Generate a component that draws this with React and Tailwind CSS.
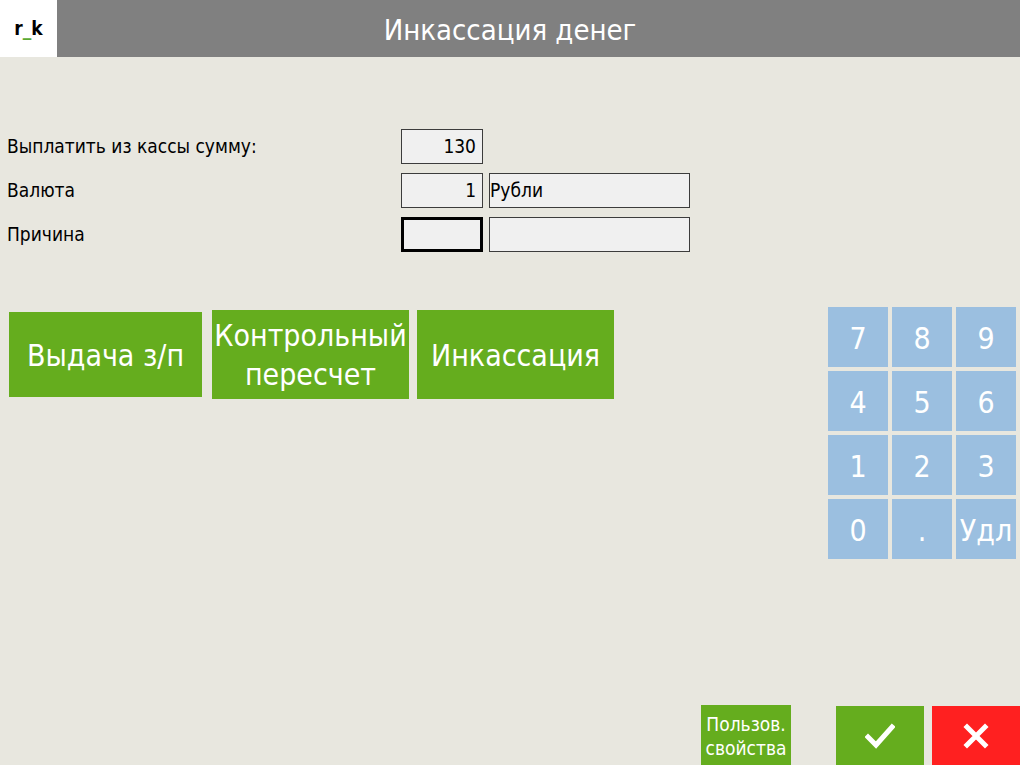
const font = "font-['Tahoma','DejaVu_Sans_Condensed','Noto_Sans',sans-serif]";

const keys = ["7", "8", "9", "4", "5", "6", "1", "2", "3", "0", ".", "Удл"];

function Field({ value, align = "right", w = "w-[82px]", focused = false }) {
  return (
    <div
      className={`${w} h-[35px] flex items-center bg-[#f0f0f0] text-[19px] text-black ${
        focused ? "border-[3px] border-black" : "border border-[#3c3c3c]"
      } ${align === "right" ? "justify-end pr-[6px]" : "justify-start pl-[0px]"}`}
    >
      {value}
    </div>
  );
}

export default function App() {
  return (
    <div className={`w-[1020px] h-[765px] flex flex-col bg-[#e8e7df] ${font} overflow-hidden`}>
      <header className="h-[57px] flex bg-[#808080] relative">
        <div className="w-[57px] h-[57px] bg-white flex items-center justify-center text-[19px] font-semibold text-black">
          r<span className="text-[#5aa832]">_</span>k
        </div>
        <h1 className="absolute inset-0 pt-[4px] flex items-center justify-center text-white text-[29px] pointer-events-none">
          Инкассация денег
        </h1>
      </header>

      <div className="pt-[72px] pl-[7px] flex flex-col gap-[9px] text-[19px] text-black">
        <div className="flex items-center h-[35px]">
          <div className="w-[394px]">Выплатить из кассы сумму:</div>
          <Field value="130" />
        </div>
        <div className="flex items-center h-[35px] gap-[6px]">
          <div className="w-[388px]">Валюта</div>
          <Field value="1" />
          <Field value="Рубли" align="left" w="w-[201px]" />
        </div>
        <div className="flex items-center h-[35px] gap-[6px]">
          <div className="w-[388px]">Причина</div>
          <Field value="" focused />
          <Field value="" align="left" w="w-[201px]" />
        </div>
      </div>

      <div className="mt-[55px] flex justify-between pr-[4px] pl-[9px]">
        <div className="flex items-center h-[89px] mt-[3px] gap-[8px] text-white text-[30px] leading-[39px] text-center">
          <button className="w-[193px] h-[85px] bg-[#65ad1e] mr-[2px] pt-[2px]">Выдача з/п</button>
          <button className="w-[197px] h-[89px] bg-[#65ad1e]">
            Контрольный
            <br />
            пересчет
          </button>
          <button className="w-[197px] h-[89px] bg-[#65ad1e] pt-[2px]">Инкассация</button>
        </div>
        <div className="grid grid-cols-3 gap-[4px] w-[188px]">
          {keys.map((k) => (
            <button
              key={k}
              className="h-[60px] pt-[2px] bg-[#9bbfe0] text-white text-[30px] flex items-center justify-center"
            >
              {k}
            </button>
          ))}
        </div>
      </div>

      <div className="flex-1" />

      <div className="flex items-end h-[60px]">
        <div className="w-[701px]" />
        <button className="w-[90px] h-[60px] bg-[#65ad1e] text-white text-[19px] leading-[24px] text-center pt-[2px]">
          Пользов.
          <br />
          свойства
        </button>
        <div className="w-[45px]" />
        <button className="w-[88px] h-[59px] bg-[#65ad1e] flex items-center justify-center">
          <svg width="30" height="26" viewBox="0 0 30 26">
            <path d="M3 14 L11 22 L27 4" fill="none" stroke="white" strokeWidth="5" strokeLinecap="square" />
          </svg>
        </button>
        <div className="w-[8px]" />
        <button className="w-[88px] h-[59px] bg-[#ff2020] flex items-center justify-center">
          <svg width="26" height="26" viewBox="0 0 26 26">
            <path d="M4 4 L22 22 M22 4 L4 22" fill="none" stroke="white" strokeWidth="5" strokeLinecap="square" />
          </svg>
        </button>
      </div>
    </div>
  );
}
